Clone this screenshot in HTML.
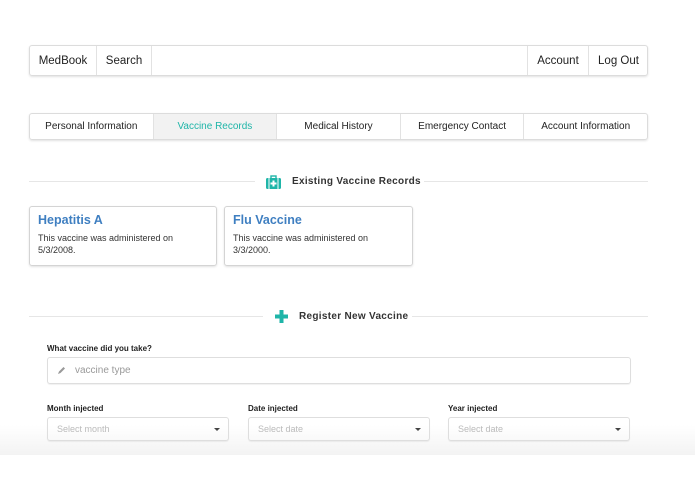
<!DOCTYPE html><html><head><style>
*{box-sizing:border-box;margin:0;padding:0}
body{width:695px;height:494px;background:#fff;font-family:"Liberation Sans",sans-serif;color:#222;position:relative;overflow:hidden}
.a{position:absolute}
.nav{left:29px;top:45px;width:619px;height:31px;border:1px solid #dcdcdc;border-radius:3px;box-shadow:0 1px 2px rgba(0,0,0,.12);font-size:11.5px}
.nav div{position:absolute;top:0;height:29px;line-height:31px;text-align:center}
.tabs{left:29px;top:113px;width:619px;height:27px;border:1px solid #dcdcdc;border-radius:3px;box-shadow:0 1px 2px rgba(0,0,0,.12);display:flex;font-size:10px}
.tabs div{flex:1;text-align:center;line-height:26px;border-right:1px solid #e2e2e2}
.tabs div:last-child{border:none}
.hr{height:1px;background:#e6e6e6}
.h{font-size:10px;font-weight:bold;color:#333;letter-spacing:.3px}
.card{top:206px;height:60px;border:1px solid #d4d4d4;border-radius:3px;box-shadow:0 1px 2px rgba(0,0,0,.12);padding:6px 8px}
.card b{display:block;color:#3f7fc1;font-size:12.5px;margin-bottom:5px}
.card p{font-size:9px;line-height:12px;color:#333}
.lbl{font-size:8px;font-weight:bold;color:#222}
.box{border:1px solid #dedede;border-radius:3px;box-shadow:0 1px 1px rgba(0,0,0,.06);font-size:9px;color:#bbb;padding-left:9px}
.sel{top:417px;height:24px;line-height:22px}
.sel:after{content:"";position:absolute;right:8px;top:10px;border:3px solid transparent;border-top:3px solid #444}
.fade{left:0;top:425px;width:695px;height:30px;background:linear-gradient(#fff,#f3f3f3);z-index:-1}
</style></head><body>
<div class="a fade"></div>
<div class="a nav">
<div style="left:0;width:67px;border-right:1px solid #e2e2e2">MedBook</div>
<div style="left:67px;width:55px;border-right:1px solid #e2e2e2">Search</div>
<div style="left:497px;width:61px;border-left:1px solid #e2e2e2">Account</div>
<div style="left:558px;width:60px;border-left:1px solid #e2e2e2">Log Out</div>
</div>
<div class="a tabs"><div>Personal Information</div><div style="background:#f2f2f2;color:#1fb5a8">Vaccine Records</div><div>Medical History</div><div>Emergency Contact</div><div>Account Information</div></div>
<div class="a hr" style="left:29px;top:181px;width:226px"></div>
<div class="a hr" style="left:424px;top:181px;width:224px"></div>
<svg class="a" style="left:266px;top:175px" width="15" height="14" viewBox="0 0 15 14"><rect x="5" y="1" width="5" height="3" fill="none" stroke="#1fb5a8" stroke-width="1.4"/><rect x="0" y="3" width="15" height="11" rx="1.5" fill="#1fb5a8"/><rect x="2.5" y="3" width="1" height="11" fill="#fff"/><rect x="11.5" y="3" width="1" height="11" fill="#fff"/><rect x="6.5" y="5.5" width="2" height="6" fill="#fff"/><rect x="4.5" y="7.5" width="6" height="2" fill="#fff"/></svg>
<div class="a h" style="left:292px;top:176px">Existing Vaccine Records</div>
<div class="a card" style="left:29px;width:188px"><b>Hepatitis A</b><p>This vaccine was administered on<br>5/3/2008.</p></div>
<div class="a card" style="left:224px;width:189px"><b>Flu Vaccine</b><p>This vaccine was administered on<br>3/3/2000.</p></div>
<div class="a hr" style="left:29px;top:316px;width:234px"></div>
<div class="a hr" style="left:412px;top:316px;width:236px"></div>
<svg class="a" style="left:275px;top:310px" width="13" height="13"><rect x="4.5" y="0" width="4" height="13" fill="#1fb5a8"/><rect x="0" y="4.5" width="13" height="4" fill="#1fb5a8"/></svg>
<div class="a h" style="left:299px;top:311px">Register New Vaccine</div>
<div class="a lbl" style="left:47px;top:344px">What vaccine did you take?</div>
<div class="a box" style="left:47px;top:357px;width:584px;height:27px;line-height:26px;padding-left:27px;font-size:10px;color:#999">vaccine type</div>
<svg class="a" style="left:57px;top:366px" width="9" height="9"><path d="M1 8 L2 5.5 L6.5 1 L8 2.5 L3.5 7 Z" fill="#999"/></svg>
<div class="a lbl" style="left:47px;top:404px">Month injected</div>
<div class="a lbl" style="left:248px;top:404px">Date injected</div>
<div class="a lbl" style="left:448px;top:404px">Year injected</div>
<div class="a box sel" style="left:47px;width:182px">Select month</div>
<div class="a box sel" style="left:248px;width:182px">Select date</div>
<div class="a box sel" style="left:448px;width:182px">Select date</div>
</body></html>
